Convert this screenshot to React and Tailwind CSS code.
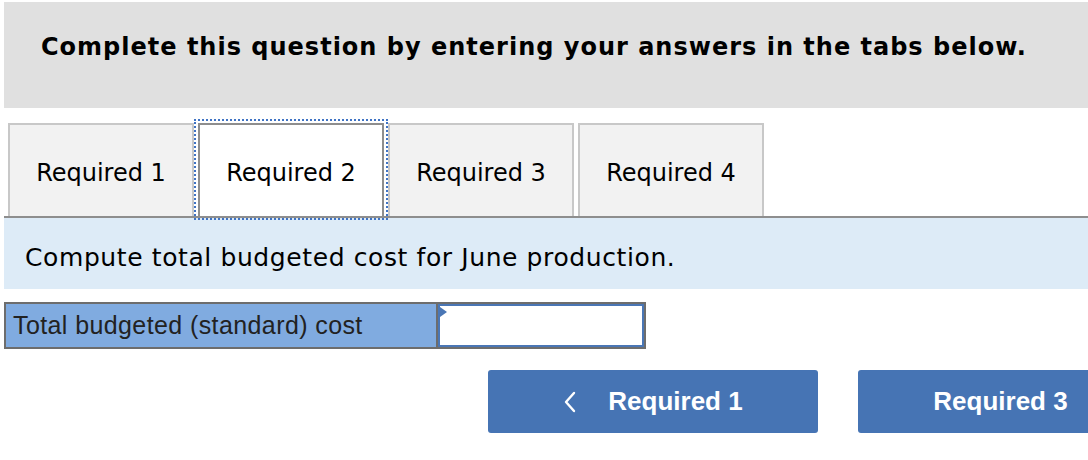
import React, { useState } from "react";

const tabs = ["Required 1", "Required 2", "Required 3", "Required 4"];

function Chevron({ dir = "left" }) {
  return (
    <svg width="14" height="22" viewBox="0 0 14 22" className="shrink-0">
      <polyline
        points={dir === "left" ? "11,2 3,11 11,20" : "3,2 11,11 3,20"}
        fill="none"
        stroke="white"
        strokeWidth="2.4"
        strokeLinecap="round"
        strokeLinejoin="round"
      />
    </svg>
  );
}

export default function App() {
  const [active, setActive] = useState(1);
  const [value, setValue] = useState("");

  return (
    <div className="w-[1088px] h-[460px] overflow-hidden bg-white font-['DejaVu_Sans',sans-serif]">
      {/* Header */}
      <div className="ml-1 mt-[2px] h-[106px] bg-[#e0e0e0] pl-[37px] pt-[30px]">
        <p className="text-[24px] leading-[30px] font-bold tracking-[1px] text-black">
          Complete this question by entering your answers in the tabs below.
        </p>
      </div>

      {/* Tabs */}
      <div className="ml-1 mt-[15px] border-b-2 border-[#8e8e8e] pl-1 flex gap-1">
        {tabs.map((t, i) => (
          <button
            key={t}
            onClick={() => setActive(i)}
            className={
              i === active
                ? "w-[186px] h-[93px] pt-1 bg-white border-2 border-b-0 border-[#8e8e8e] text-[24px] text-black outline-2 outline-dotted outline-[#3f73c4] outline-offset-[2px]"
                : "w-[186px] h-[93px] pt-1 bg-[#f2f2f2] border-2 border-b-0 border-[#c8c8c8] text-[24px] text-black"
            }
          >
            {t}
          </button>
        ))}
      </div>

      {/* Instruction band */}
      <div className="ml-1 h-[71px] bg-[#ddebf7] pl-[21px] flex items-center">
        <p className="text-[25px] tracking-[0.6px] text-black pt-2">Compute total budgeted cost for June production.</p>
      </div>

      {/* Answer row */}
      <div className="ml-1 mt-[13px] w-[642px] h-[47px] border-2 border-[#6d6d6d] flex font-['Liberation_Sans',Arial,sans-serif]">
        <div className="w-[432px] bg-[#80abe0] border-r-2 border-[#6d6d6d] pl-[7px] flex items-center">
          <span className="text-[25px] leading-none text-[#222] tracking-[0.4px]">Total budgeted (standard) cost</span>
        </div>
        <div className="relative flex-1 border-2 border-[#4a76b5] bg-white">
          <span className="absolute left-0 top-[1px] w-0 h-0 border-t-[5px] border-b-[5px] border-l-[7px] border-t-transparent border-b-transparent border-l-[#4a76b5]" />
          <input
            value={value}
            onChange={(e) => setValue(e.target.value)}
            className="w-full h-full px-2 text-right text-[20px] outline-none bg-transparent"
          />
        </div>
      </div>

      {/* Navigation buttons */}
      <div className="mt-[21px] pl-[488px] flex gap-10 font-['Liberation_Sans',Arial,sans-serif]">
        <button
          onClick={() => setActive(0)}
          className="shrink-0 w-[330px] h-[63px] rounded-[3px] bg-[#4674b4] text-white flex items-center justify-center gap-[31px]"
        >
          <Chevron dir="left" />
          <span className="text-[26px] font-bold">Required 1</span>
        </button>
        <button
          onClick={() => setActive(2)}
          className="shrink-0 w-[330px] h-[63px] rounded-[3px] bg-[#4674b4] text-white flex items-center justify-center gap-[31px]"
        >
          <span className="text-[26px] font-bold">Required 3</span>
          <Chevron dir="right" />
        </button>
      </div>
    </div>
  );
}
